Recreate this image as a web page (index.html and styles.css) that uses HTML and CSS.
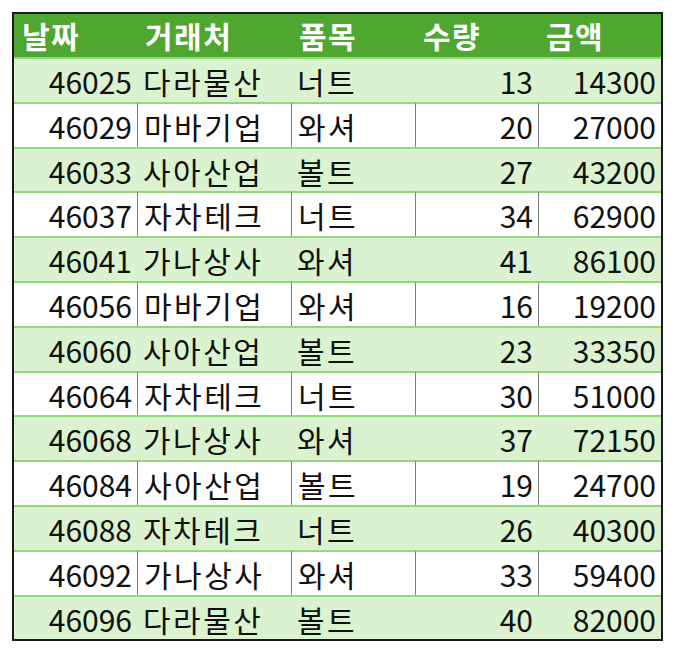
FILE: index.html
```html
<!DOCTYPE html>
<html lang="ko">
<head>
<meta charset="utf-8">
<link rel="stylesheet" href="styles.css">
</head>
<body>
<table class="sheet">
  <colgroup>
    <col class="c1"><col class="c2"><col class="c3"><col class="c4"><col class="c5">
  </colgroup>
  <thead>
    <tr><th>날짜</th><th>거래처</th><th>품목</th><th>수량</th><th>금액</th></tr>
  </thead>
  <tbody>
    <tr><td class="num">46025</td><td>다라물산</td><td>너트</td><td class="num">13</td><td class="num">14300</td></tr>
    <tr><td class="num">46029</td><td>마바기업</td><td>와셔</td><td class="num">20</td><td class="num">27000</td></tr>
    <tr><td class="num">46033</td><td>사아산업</td><td>볼트</td><td class="num">27</td><td class="num">43200</td></tr>
    <tr><td class="num">46037</td><td>자차테크</td><td>너트</td><td class="num">34</td><td class="num">62900</td></tr>
    <tr><td class="num">46041</td><td>가나상사</td><td>와셔</td><td class="num">41</td><td class="num">86100</td></tr>
    <tr><td class="num">46056</td><td>마바기업</td><td>와셔</td><td class="num">16</td><td class="num">19200</td></tr>
    <tr><td class="num">46060</td><td>사아산업</td><td>볼트</td><td class="num">23</td><td class="num">33350</td></tr>
    <tr><td class="num">46064</td><td>자차테크</td><td>너트</td><td class="num">30</td><td class="num">51000</td></tr>
    <tr><td class="num">46068</td><td>가나상사</td><td>와셔</td><td class="num">37</td><td class="num">72150</td></tr>
    <tr><td class="num">46084</td><td>사아산업</td><td>볼트</td><td class="num">19</td><td class="num">24700</td></tr>
    <tr><td class="num">46088</td><td>자차테크</td><td>너트</td><td class="num">26</td><td class="num">40300</td></tr>
    <tr><td class="num">46092</td><td>가나상사</td><td>와셔</td><td class="num">33</td><td class="num">59400</td></tr>
    <tr><td class="num">46096</td><td>다라물산</td><td>볼트</td><td class="num">40</td><td class="num">82000</td></tr>
  </tbody>
</table>
</body>
</html>
```
FILE: styles.css
```css
html, body {
  margin: 0;
  padding: 0;
  background: #ffffff;
}
body {
  padding: 12px 0 0 12px;
  font-family: "Noto Sans CJK KR", "Noto Sans", sans-serif;
  color: #111111;
}
.sheet {
  border-collapse: separate;
  border-spacing: 0;
  border: 2px solid #1a1a1a;
  table-layout: fixed;
  width: 651px;
}
.c1 { width: 123px; }
.c2 { width: 154px; }
.c3 { width: 124px; }
.c4 { width: 123px; }
.c5 { width: 123px; }
.sheet th {
  background: #4ea72e;
  color: #ffffff;
  font-weight: 700;
  font-size: 30px;
  letter-spacing: 1.5px;
  text-align: left;
  padding: 0 0 0 8px;
  height: 43px;
  line-height: 43px;
  white-space: nowrap;
  overflow: hidden;
}
.sheet td {
  font-size: 30px;
  letter-spacing: 2.5px;
  height: 39.8px;
  line-height: 39.8px;
  padding: 3px 0 0 6px;
  border-top: 2px solid #93d87c;
  white-space: nowrap;
  overflow: hidden;
}
.sheet td.num {
  text-align: right;
  letter-spacing: 0;
  padding: 3px 5px 0 0;
}
.sheet tbody tr:nth-child(odd) td {
  background: #daf2d0;
}
.sheet tbody tr:nth-child(even) td + td {
  border-left: 1px solid #7f7f7f;
}
```
